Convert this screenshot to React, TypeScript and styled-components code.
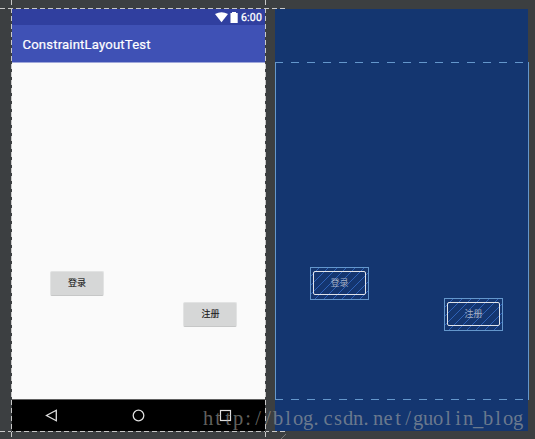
import React from 'react';
import styled, { createGlobalStyle } from 'styled-components';

const GlobalStyle = createGlobalStyle`
  * { box-sizing: border-box; }
  body { margin: 0; background: #3c3f41; overflow: hidden; }
`;

const Editor = styled.main`
  position: relative;
  display: flex;
  gap: 10px;
  width: 535px;
  height: 439px;
  padding: 9px 0 8px 12px;
  overflow: hidden;
  background: #3c3f41;
  font-family: Roboto, 'Noto Sans CJK SC', sans-serif;
`;

const Device = styled.section`
  display: flex;
  flex-direction: column;
  width: 253px;
  height: 422px;
`;

const StatusBar = styled.div`
  display: flex;
  align-items: center;
  justify-content: flex-end;
  height: 16px;
  padding-right: 3px;
  background: #303f9f;
  color: #fff;
`;

const Clock = styled.span`
  width: 21px;
  margin-left: 2px;
  padding-top: 2px;
  font-size: 10.5px;
  line-height: 16px;
  font-weight: 400;
  letter-spacing: 0.2px;
  -webkit-text-stroke: 0.3px #fff;
  white-space: nowrap;
`;

const AppBar = styled.header`
  display: flex;
  align-items: center;
  height: 38px;
  padding: 1px 0 0 10.5px;
  border-bottom: 1px solid #9fa7da;
  background: #3f51b5;
  color: #fff;
  font-size: 13.1px;
  font-weight: 400;
  letter-spacing: 0.18px;
  -webkit-text-stroke: 0.2px #fff;
`;

const Content = styled.div`
  flex: 1;
  display: flex;
  flex-direction: column;
  align-items: flex-start;
  padding-top: 208px;
  background: #fafafa;
`;

const WidgetButton = styled.button<{ $left: number; $gap?: number }>`
  flex: none;
  width: 54px;
  height: 25px;
  margin: ${(p) => p.$gap ?? 0}px 0 0 ${(p) => p.$left}px;
  padding: 0 0 1px;
  border: 1px solid #e2e3e3;
  border-bottom-color: #c6c7c7;
  border-radius: 2px;
  background: #d6d7d7;
  color: #1c1c1c;
  font: 400 9px/20px 'Noto Sans CJK SC', sans-serif;
  -webkit-text-stroke: 0.12px #1c1c1c;
`;

const NavBar = styled.nav`
  display: flex;
  align-items: center;
  justify-content: space-between;
  height: 32px;
  padding: 0 33px 0 33px;
  border-top: 1px solid #606060;
  background: #000;
`;

const Blueprint = styled.section`
  width: 254px;
  height: 423px;
  padding-top: 53px;
  background: linear-gradient(#143670, #143670) 0 0 / 253px 422px no-repeat;
`;

const dashes = 'repeating-linear-gradient(90deg, #6497cc 0 8.5px, transparent 8.5px 16px)';

const BlueprintCanvas = styled.div`
  display: flex;
  flex-direction: column;
  align-items: flex-start;
  height: 338px;
  padding-top: 205px;
  border: solid #6497cc;
  border-width: 0 1px;
  background: ${dashes} -1px 0 / 253px 1px no-repeat, ${dashes} -1px 100% / 253px 1px no-repeat;
`;

const Bounds = styled.div<{ $left: number; $gap?: number }>`
  flex: none;
  width: 59px;
  height: 33px;
  margin: ${(p) => p.$gap ?? 0}px 0 0 ${(p) => p.$left}px;
  padding: 3px 2px;
  border: 1px solid #6497cc;
  background: repeating-linear-gradient(135deg, transparent 0 5.2px, #2e62b8 5.4px 6.2px, transparent 6.364px);
`;

const Outline = styled.div`
  width: 53px;
  height: 24px;
  border: 1px solid #e0e4ea;
  border-radius: 2px;
  color: #a5b0c5;
  text-align: center;
  font: 400 9px/22px 'Noto Sans CJK SC', sans-serif;
`;

const Guide = styled.i<{ $vertical?: boolean; $at: number }>`
  position: absolute;
  ${(p) =>
    p.$vertical
      ? `left: ${p.$at}px; top: 0; width: 1px; height: 100%;`
      : `top: ${p.$at}px; left: 0; height: 1px; width: 285px;`}
  background: repeating-linear-gradient(
    ${(p) => (p.$vertical ? '180deg' : '90deg')},
    #c8c8c8 0 5px, #3c3f41 5px 8px
  );
`;

const Watermark = styled.svg`
  position: absolute;
  left: 203px;
  top: 405px;
  fill: rgba(172, 172, 164, 0.58);
  font: 20.5px 'Liberation Serif', serif;
  text-anchor: middle;
`;

const ResizeHandle = styled.svg`
  position: absolute;
  left: 280px;
  top: 433px;
`;

const watermarkUrl = 'http://blog.csdn.net/guolin_blog';
/* Every letter sits in the middle of a 10px cell; dots lean left in theirs. */
const watermarkCells = [...watermarkUrl].map((c, i) => i * 10 + (c === '.' ? 3 : 5)).join(' ');

export default function App() {
  return (
    <Editor>
      <GlobalStyle />
      <Device>
        <StatusBar>
          <svg width="24" height="14" viewBox="0 0 24 14" fill="#fff">
            <path d="M0 4Q6.5 .3 13 4L6.5 12.2Z" />
            <path d="M15.5 3H17V2h4v1h1.7v10h-7.2z" />
          </svg>
          <Clock>6:00</Clock>
        </StatusBar>
        <AppBar>ConstraintLayoutTest</AppBar>
        <Content>
          <WidgetButton $left={38}>登录</WidgetButton>
          <WidgetButton $left={171.4} $gap={6}>注册</WidgetButton>
        </Content>
        <NavBar>
          <svg width="13" height="13" viewBox="0 0 13 13" fill="none" stroke="#dedede" strokeWidth="1.3">
            <path d="M11.3 1.3v10.4L1.5 6.5z" />
          </svg>
          <svg width="13" height="13" viewBox="0 0 13 13" fill="none" stroke="#dedede" strokeWidth="1.3">
            <circle cx="6.5" cy="6.5" r="5.3" />
          </svg>
          <svg width="13" height="13" viewBox="0 0 13 13" fill="none" stroke="#dedede" strokeWidth="1.2">
            <rect x="1.5" y="1.5" width="10" height="10" />
          </svg>
        </NavBar>
      </Device>
      <Blueprint>
        <BlueprintCanvas>
          <Bounds $left={34}><Outline>登录</Outline></Bounds>
          <Bounds $left={168} $gap={-2}><Outline>注册</Outline></Bounds>
        </BlueprintCanvas>
      </Blueprint>
      <Guide $at={8} />
      <Guide $at={431} />
      <Guide $vertical $at={11} />
      <Guide $vertical $at={265} />
      <ResizeHandle width="8" height="6" stroke="#777" fill="none">
        <path d="M1 6L6 1" />
      </ResizeHandle>
      <Watermark width="322" height="28">
        <text x={watermarkCells} y="20">{watermarkUrl}</text>
      </Watermark>
    </Editor>
  );
}
